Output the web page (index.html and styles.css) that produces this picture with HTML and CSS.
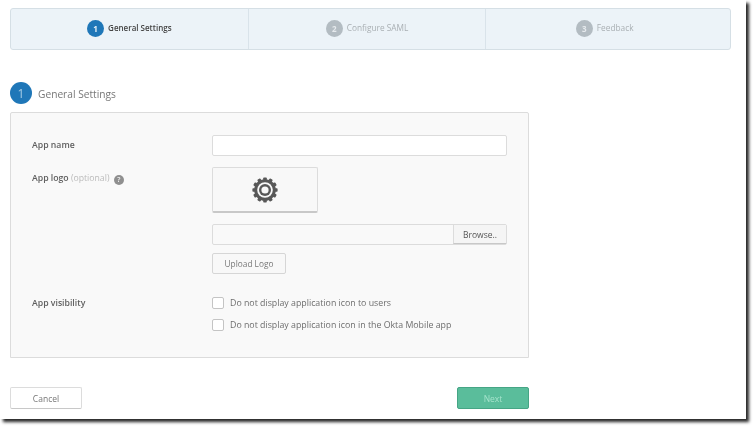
FILE: index.html
```html
<!DOCTYPE html>
<html lang="en">
<head>
<meta charset="utf-8">
<title>Create SAML Integration</title>
<link rel="stylesheet" href="styles.css">
</head>
<body>
<div class="screen">
  <ol class="steps">
    <li class="step active"><span class="step-num">1</span><span class="step-text">General Settings</span></li>
    <li class="step"><span class="step-num">2</span><span class="step-text">Configure SAML</span></li>
    <li class="step step-last"><span class="step-num">3</span><span class="step-text">Feedback</span></li>
  </ol>
  <h2 class="section-head"><span class="section-num">1</span><span class="section-title">General Settings</span></h2>
  <form class="panel">
    <div class="row row-name">
      <label class="label">App name</label>
      <div class="field"><input class="text-input" type="text"></div>
    </div>
    <div class="row row-logo">
      <div class="label">App logo <span class="optional">(optional)</span> <span class="help">?</span></div>
      <div class="field">
        <div class="logo-box">
          <svg class="gear" viewBox="0 0 26 26" width="26" height="26" aria-hidden="true">
            <g fill="#585858">
              <rect x="11.2" y="0.4" width="3.6" height="25.2" rx=".8"/>
              <rect x="11.2" y="0.4" width="3.6" height="25.2" rx=".8" transform="rotate(30 13 13)"/>
              <rect x="11.2" y="0.4" width="3.6" height="25.2" rx=".8" transform="rotate(60 13 13)"/>
              <rect x="11.2" y="0.4" width="3.6" height="25.2" rx=".8" transform="rotate(90 13 13)"/>
              <rect x="11.2" y="0.4" width="3.6" height="25.2" rx=".8" transform="rotate(120 13 13)"/>
              <rect x="11.2" y="0.4" width="3.6" height="25.2" rx=".8" transform="rotate(150 13 13)"/>
              <circle cx="13" cy="13" r="10.8"/>
            </g>
            <circle cx="13" cy="13" r="7.8" fill="#f8f8f8"/>
            <circle cx="13" cy="13" r="6" fill="#585858"/>
            <circle cx="13" cy="13" r="3.6" fill="#f8f8f8"/>
          </svg>
        </div>
        <div class="file-row"><div class="file-name"></div><button class="browse" type="button">Browse..</button></div>
        <button class="upload" type="button">Upload Logo</button>
      </div>
    </div>
    <div class="row row-vis">
      <div class="label">App visibility</div>
      <div class="field checks">
        <label class="check"><span class="box"></span>Do not display application icon to users</label>
        <label class="check"><span class="box"></span>Do not display application icon in the Okta Mobile app</label>
      </div>
    </div>
  </form>
  <div class="actions">
    <button class="btn" type="button">Cancel</button>
    <button class="btn btn-next" type="button">Next</button>
  </div>
</div>
</body>
</html>
```
FILE: styles.css
```css
* { box-sizing: border-box; }
html, body { margin: 0; height: 100%; background: #fff; overflow: hidden; }
body { font-family: "Open Sans", "Lato", sans-serif; color: #5e5e5e; }
.screen {
  width: 746px;
  height: 419px;
  background: #fff;
  padding: 8px 15px 0 10px;
  box-shadow: 3px 3px 3px rgba(0,0,0,.85);
}
.steps {
  list-style: none;
  margin: 0;
  padding: 0;
  height: 42px;
  display: flex;
  background: #ecf3f8;
  border: 1px solid #d5dfe5;
  border-radius: 3px;
  filter: blur(.45px);
}
.step {
  width: 238px;
  padding-bottom: 1px;
  display: flex;
  align-items: center;
  justify-content: center;
  gap: 4px;
  font-size: 8.3px;
  color: #a9afb3;
  border-left: 1px solid #d9e3ea;
}
.step:first-child { border-left: 0; width: 237px; }
.step-last { width: 245px; padding-right: 7px; }
.step-text { margin-bottom: 2px; }
.step-num {
  width: 17px;
  height: 17px;
  border-radius: 50%;
  background: #b3bcc2;
  color: #e6eaed;
  display: flex;
  align-items: center;
  justify-content: center;
  font-weight: 700;
  font-size: 8px;
}
.step.active { color: #444; font-weight: 600; font-size: 8px; }
.step.active .step-num { background: #1f77b8; color: #e6f0f7; }
.section-head {
  margin: 32px 0 8px;
  height: 22px;
  display: flex;
  align-items: center;
  gap: 6px;
  font-weight: 400;
  filter: blur(.45px);
}
.section-num {
  width: 22px;
  height: 22px;
  border-radius: 50%;
  background: #1f77b8;
  color: #a9cde6;
  display: flex;
  align-items: center;
  justify-content: center;
  font-size: 12px;
}
.section-title { font-size: 10.2px; color: #777; margin-top: 1px; }
.panel {
  width: 519px;
  height: 246px;
  background: #f9f9f9;
  border: 1px solid #dcdcdc;
  border-radius: 2px 2px 0 0;
  padding: 22px 21px 0;
  font-size: 8.7px;
  filter: blur(.45px);
}
.row { display: flex; }
.label { width: 180px; font-weight: 600; color: #5e5e5e; line-height: 20px; }
.field { width: 295px; }
.optional { font-weight: 400; color: #bbb; }
.help {
  display: inline-flex;
  width: 10px;
  height: 10px;
  margin-left: 2px;
  border-radius: 50%;
  background: #8f8f8f;
  color: #f3f3f3;
  align-items: center;
  justify-content: center;
  font-size: 7px;
  vertical-align: -1px;
}
.text-input {
  display: block;
  width: 100%;
  height: 21px;
  background: #fff;
  border: 1px solid #dcdcdc;
  border-radius: 2px;
  padding: 0;
}
.row-logo { margin-top: 11px; }
.row-logo .label { padding-top: 1px; }
.logo-box {
  width: 106px;
  height: 46px;
  display: flex;
  align-items: center;
  justify-content: center;
  background: #f8f8f8;
  border: 1px solid #dcdcdc;
  border-bottom: 2px solid #c8c8c8;
  border-radius: 2px;
}
.file-row {
  display: flex;
  height: 21px;
  margin-top: 11px;
  border: 1px solid #dcdcdc;
  border-radius: 2px;
}
.file-name { flex: 1; }
.browse {
  width: 53px;
  padding: 0;
  font: inherit;
  font-size: 8.5px;
  color: #555;
  background: #f5f5f5;
  border: 0;
  border-left: 1px solid #dcdcdc;
  border-bottom: 1px solid #c8c8c8;
}
.upload {
  display: block;
  width: 74px;
  height: 21px;
  margin-top: 8px;
  padding: 0;
  font: inherit;
  font-size: 8.3px;
  color: #777;
  background: #f8f8f8;
  border: 1px solid #d6d6d6;
  border-radius: 2px;
}
.row-vis { margin-top: 22px; }
.row-vis .label { padding-top: 1px; margin-top: -4px; }
.checks { display: flex; flex-direction: column; gap: 9px; }
.check { display: flex; align-items: center; gap: 6px; height: 13px; color: #6e6e6e; font-size: 8.8px; }
.box {
  width: 12px;
  height: 12px;
  background: #fff;
  border: 1px solid #c4c4c4;
  border-radius: 2px;
}
.actions {
  width: 519px;
  margin-top: 29px;
  display: flex;
  justify-content: space-between;
  filter: blur(.45px);
}
.btn {
  width: 72px;
  height: 22px;
  padding: 0;
  font: inherit;
  font-size: 8.5px;
  color: #777;
  background: #fff;
  border: 1px solid #dcdcdc;
  border-bottom-color: #c8c8c8;
  border-radius: 2px;
}
.btn-next {
  color: #a5e3cc;
  background: #5abd9b;
  border-color: #46a585;
}
```
